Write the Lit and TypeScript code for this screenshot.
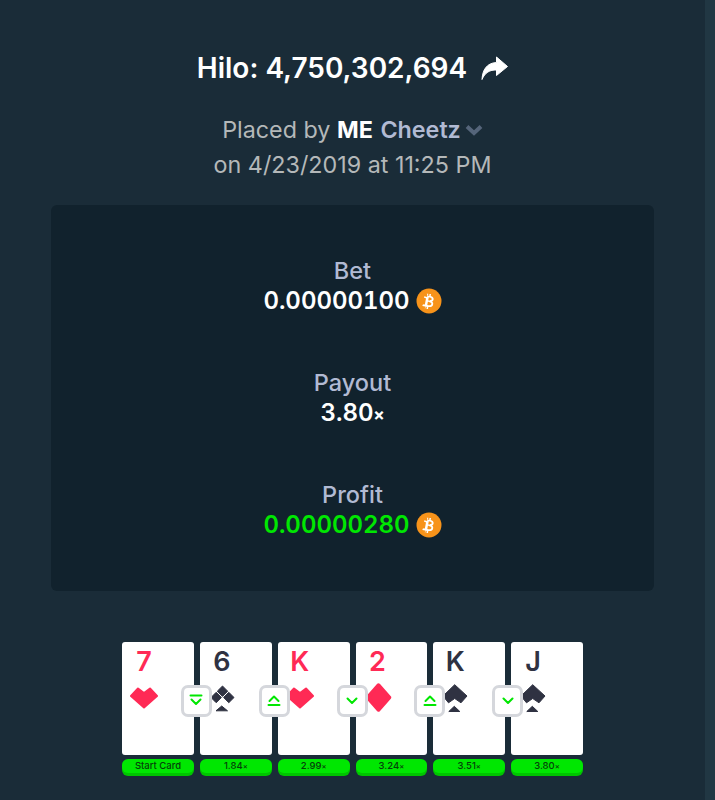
import { LitElement, html, css, svg } from "lit";
import { customElement } from "lit/decorators.js";

const suits: Record<string, any> = {
  heart: svg`<path class="r" d="M8 5.500 14 10 20 5.500 27 13 14 24.500 1 13Z"/>`,
  diamond: svg`<path class="r thick" d="M14.500 2 25.500 14.500 14.500 27 3.500 14.500Z"/>`,
  club: svg`<g class="d"><path d="M14.500 3 19.700 8.200 14.500 13.400 9.300 8.200Z"/><path d="M8.200 9.300 13.400 14.500 8.200 19.700 3 14.500Z"/><path d="M20.800 9.300 26 14.500 20.800 19.700 15.600 14.500Z"/><path d="M13.700 23 19.500 27.800H8Z"/></g>`,
  spade: svg`<g class="d"><path d="M13.700 1.700 26 13 20 19.800 13.700 15.500 7.500 19.800 2 13Z"/><path d="M13.300 23.300 18.800 28.500H7.800Z"/></g>`,
};

const arrows: Record<string, any> = {
  down: svg`<path class="a" d="M3.500 5.500 8 10 12.500 5.500"/>`,
  up2: svg`<path class="a" d="M3.500 8 8 3.500 12.500 8"/><path class="a" d="M2.500 12H13.500"/>`,
  down2: svg`<path class="a" d="M2.500 2.500H13.500"/><path class="a" d="M3.500 6.500 8 11 12.500 6.500"/>`,
};

const cards = [
  { rank: "7", suit: "heart", red: true, label: "Start Card", mult: false, arrow: "" },
  { rank: "6", suit: "club", red: false, label: "1.84", mult: true, arrow: "down2" },
  { rank: "K", suit: "heart", red: true, label: "2.99", mult: true, arrow: "up2" },
  { rank: "2", suit: "diamond", red: true, label: "3.24", mult: true, arrow: "down" },
  { rank: "K", suit: "spade", red: false, label: "3.51", mult: true, arrow: "up2" },
  { rank: "J", suit: "spade", red: false, label: "3.80", mult: true, arrow: "down" },
];

const btc = html`<svg class="coin" viewBox="0 0 26 26" aria-hidden="true">
  <circle cx="13" cy="13" r="12.500" fill="#f7931a"/>
  <path fill="#fff" fill-rule="evenodd" d="M10.800 5.800h1.500l-.3 1.900c.4 0 .8.100 1.200.200l.3-1.900h1.500l-.3 2c1.900.6 3.200 1.500 2.900 3.400-.2 1.300-.9 2-1.900 2.200 1.300.7 1.900 1.700 1.300 3.400-.7 2.100-2.400 2.300-4.700 1.900l-.3 2h-1.500l.3-2-1.200-.3-.3 2H8.800l.3-2-2.800-.6.700-1.700s1.100.3 1.200.3c.4.100.6-.200.7-.4l1-5.300c0-.3-.1-.7-.7-.8 0 0-1.100-.3-1.100-.3l.2-1.500 2.800.6.300-2Zm1.100 8-.6 3.200c1 .3 3.700.9 4.100-.9.400-1.700-2.500-2-3.500-2.300Zm.9-4.500-.6 2.900c.8.200 3.100.6 3.500-.9.300-1.500-2.100-1.800-2.900-2Z"/>
</svg>`;

@customElement("app-root")
export class AppRoot extends LitElement {
  static styles = css`
    :host {
      display: flex;
      height: 800px;
      overflow: hidden;
      background: #1a2c38;
      font-family: "Inter", "Open Sans", sans-serif;
    }
    .rail { flex: none; width: 10px; background: #213743; }
    .page {
      flex: 1;
      min-width: 0;
      box-sizing: border-box;
      padding: 48px 51px 0;
      display: flex;
      flex-direction: column;
      align-items: stretch;
    }
    .title {
      display: flex;
      justify-content: center;
      align-items: center;
      gap: 14px;
      height: 40px;
      color: #fff;
      font-size: 28px;
      font-weight: 600;
      line-height: 40px;
    }
    .share { width: 27px; height: 24px; display: block; }
    .meta {
      margin-top: 24px;
      text-align: center;
      color: #b4b8b9;
      font-size: 23.300px;
      line-height: 35px;
    }
    .me { color: #fff; font-weight: 700; }
    .user { color: #b1bad3; font-weight: 600; margin-left: 1px; }
    .chev { width: 18px; height: 11px; display: inline-block; vertical-align: 2px; margin-left: 4px; }
    .panel {
      margin-top: 23px;
      height: 386px;
      box-sizing: border-box;
      background: #11222d;
      border-radius: 6px;
      padding: 51px 0 0;
      display: flex;
      flex-direction: column;
      gap: 52px;
      align-items: center;
    }
    .stat { text-align: center; height: 60px; }
    .stat-label { color: #b1bad3; font-size: 23.500px; font-weight: 500; line-height: 30px; }
    .stat-value {
      color: #fff;
      font-size: 24px;
      font-weight: 600;
      font-variant-numeric: tabular-nums;
      line-height: 30px;
      display: flex;
      justify-content: center;
      align-items: center;
      gap: 6px;
    }
    .stat-value.win { color: #00e701; }
    .x { font-size: 17px; font-weight: 700; }
    .coin { width: 26px; height: 26px; display: block; }
    .cards {
      margin-top: 51px;
      display: flex;
      justify-content: center;
      gap: 6px;
    }
    .col { width: 71.800px; display: flex; flex-direction: column; gap: 4px; }
    .card {
      position: relative;
      height: 113px;
      background: #fff;
      border-radius: 3px;
      box-sizing: border-box;
      padding: 5px 0 0 8px;
      color: #2f3242;
    }
    .card.red { color: #ff2a55; }
    .rank {
      font-size: 27px;
      font-weight: 600;
      line-height: 30px;
      height: 36px;
      width: 28px;
      text-align: center;
    }
    .suit { width: 28px; height: 30px; display: block; }
    .r { fill: #ff2a55; stroke: #ff2a55; stroke-width: 2; stroke-linejoin: round; }
    .r.thick { stroke-width: 3.500; }
    .d path { fill: #2f3242; stroke: #2f3242; stroke-width: 1; stroke-linejoin: round; }
    .a { fill: none; stroke: #00e701; stroke-width: 2; stroke-linecap: round; stroke-linejoin: round; }
    .badge {
      position: absolute;
      left: -19px;
      top: 43px;
      width: 31px;
      height: 32px;
      box-sizing: border-box;
      background: #fff;
      border: 3px solid #d5d7dc;
      border-radius: 7px;
      display: flex;
      align-items: center;
      justify-content: center;
    }
    .badge svg { width: 16px; height: 16px; display: block; }
    .tag {
      height: 14px;
      background: #00e701;
      border-radius: 6px;
      box-shadow: 0 3px 0 #00c400;
      color: #05400a;
      font-size: 9.500px;
      line-height: 14px;
      text-align: center;
      font-weight: 500;
    }
    .tag span { font-size: 7.500px; }
  `;

  render() {
    return html`<div class="page">
      <div class="title">
        <span>Hilo: 4,750,302,694</span>
        <svg class="share" viewBox="0 0 27 24" aria-hidden="true"><path fill="#fff" d="M15.500 1 26.500 10.500 15.500 19.500V14C9 13.700 4 16.500 1 23.500 1.500 13.500 6 7 15.500 6.500Z" stroke="#fff" stroke-linejoin="round"/></svg>
      </div>
      <div class="meta">
        <div>Placed by <span class="me">ME</span> <span class="user">Cheetz</span><svg class="chev" viewBox="0 0 18 11" aria-hidden="true"><path d="M2 1.500 9 8 16 1.500" fill="none" stroke="#55657a" stroke-width="4"/></svg></div>
        <div>on 4/23/2019 at 11:25 PM</div>
      </div>
      <div class="panel">
        <div class="stat">
          <div class="stat-label">Bet</div>
          <div class="stat-value">0.00000100 ${btc}</div>
        </div>
        <div class="stat">
          <div class="stat-label">Payout</div>
          <div class="stat-value"><span>3.80<span class="x">×</span></span></div>
        </div>
        <div class="stat">
          <div class="stat-label">Profit</div>
          <div class="stat-value win">0.00000280 ${btc}</div>
        </div>
      </div>
      <div class="cards">
        ${cards.map(
          (c) => html`<div class="col">
            <div class="card ${c.red ? "red" : ""}">
              <div class="rank">${c.rank}</div>
              <svg class="suit" viewBox="0 0 28 30" aria-hidden="true">${suits[c.suit]}</svg>
              ${c.arrow
                ? html`<div class="badge"><svg viewBox="0 0 16 16" aria-hidden="true">${arrows[c.arrow]}</svg></div>`
                : ""}
            </div>
            <div class="tag">${c.label}${c.mult ? html`<span>×</span>` : ""}</div>
          </div>`
        )}
      </div>
    </div>
    <div class="rail"></div>`;
  }
}
